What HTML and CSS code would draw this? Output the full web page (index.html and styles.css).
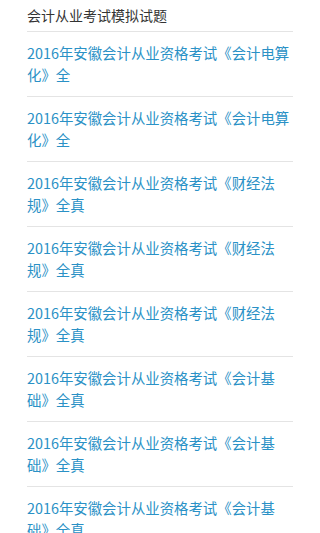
FILE: index.html
```html
<!DOCTYPE html>
<html lang="zh-CN">
<head>
<meta charset="utf-8">
<title>会计从业考试模拟试题</title>
<link rel="stylesheet" href="styles.css">
</head>
<body>
<div class="page">
  <div class="title">会计从业考试模拟试题</div>
  <ul class="list">
    <li class="item"><a href="#">2016年安徽会计从业资格考试《会计电算化》全</a></li>
    <li class="item"><a href="#">2016年安徽会计从业资格考试《会计电算化》全</a></li>
    <li class="item"><a href="#">2016年安徽会计从业资格考试《财经法规》全真</a></li>
    <li class="item"><a href="#">2016年安徽会计从业资格考试《财经法规》全真</a></li>
    <li class="item"><a href="#">2016年安徽会计从业资格考试《财经法规》全真</a></li>
    <li class="item"><a href="#">2016年安徽会计从业资格考试《会计基础》全真</a></li>
    <li class="item"><a href="#">2016年安徽会计从业资格考试《会计基础》全真</a></li>
    <li class="item"><a href="#">2016年安徽会计从业资格考试《会计基础》全真</a></li>
  </ul>
</div>
</body>
</html>
```

FILE: styles.css
```css
html, body {
  margin: 0;
  padding: 0;
  background: #ffffff;
}
body {
  font-family: "Noto Sans CJK SC", "Noto Sans", sans-serif;
}
.page {
  margin: 0 27px;
}
.title {
  font-size: 14px;
  line-height: 18px;
  color: #333333;
  padding: 6px 0 7px 0;
  border-bottom: 1px solid #e4e4e4;
}
.list {
  list-style: none;
  margin: 0;
  padding: 0;
}
.item {
  padding: 10px 0 10px 0;
  border-bottom: 1px solid #e4e4e4;
  font-size: 14.4px;
  line-height: 22px;
}
.item a {
  color: #2a91c6;
  text-decoration: none;
}
```
